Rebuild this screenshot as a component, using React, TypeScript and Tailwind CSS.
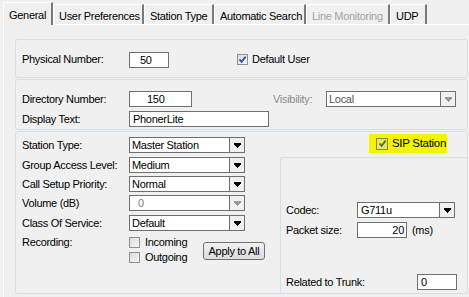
import React from "react";
import clsx from "clsx";

type TabProps = { label: string; width: string; active?: boolean; disabled?: boolean };

function Tab({ label, width, active, disabled }: TabProps) {
  return (
    <div
      className={clsx(
        "border-l border-t border-l-white border-t-white border-r-2 border-r-[#7a7a7a] pl-[5px] leading-[13px] whitespace-nowrap overflow-hidden",
        width,
        active ? "relative z-10 h-[23px] -mb-px pt-[6px] pl-[5px] bg-[#f0f0f0]" : "h-[20px] pt-[5px] pl-[4px]",
        disabled && "text-[#a3a3a3]"
      )}
    >
      {label}
    </div>
  );
}

function Arrow({ muted }: { muted?: boolean }) {
  return (
    <svg width="7" height="5" viewBox="0 0 7 5" shapeRendering="crispEdges">
      <g fill={muted ? "#9a9a9a" : "#000"}>
        <rect x="0" y="0" width="7" height="2" />
        <rect x="1" y="2" width="5" height="1" />
        <rect x="2" y="3" width="3" height="1" />
        <rect x="3" y="4" width="1" height="1" />
      </g>
    </svg>
  );
}

type SelectProps = { value: string; width: string; disabled?: boolean; textClass?: string };

function Select({ value, width, disabled, textClass }: SelectProps) {
  return (
    <div className={clsx("flex h-[16px] border border-[#6f6f6f] bg-white", width)}>
      <div
        className={clsx(
          "flex-1 leading-[14px] pl-[2px] whitespace-nowrap overflow-hidden",
          disabled && "text-[#7d7d7d]",
          textClass
        )}
      >
        {value}
      </div>
      <div className="w-[15px] border-l border-[#6f6f6f] bg-[#f0f0f0] flex items-center justify-center">
        <Arrow muted={disabled} />
      </div>
    </div>
  );
}

type InputProps = { value: string; width: string; textClass?: string };

function TextInput({ value, width, textClass }: InputProps) {
  return (
    <div className={clsx("h-[16px] border border-[#6f6f6f] bg-white leading-[14px] whitespace-nowrap", width, textClass)}>
      {value}
    </div>
  );
}

type CheckProps = { checked?: boolean; tone?: "blue" | "olive"; size?: string };

function Checkbox({ checked, tone = "blue", size = "w-[11px] h-[11px]" }: CheckProps) {
  return (
    <div
      className={clsx(
        "flex items-center justify-center border shrink-0",
        size,
        tone === "olive"
          ? "border-[#8a8a3a] bg-[#e4e46a]"
          : "border-[#8e8f8f] bg-gradient-to-br from-[#dcdcdc] to-[#f6f6f6]"
      )}
    >
      {checked && (
        <svg width="9" height="9" viewBox="0 0 9 9">
          <path
            d="M1.5 4.5 L3.6 6.8 L7.6 1.6"
            fill="none"
            stroke={tone === "olive" ? "#5a6e1c" : "#2a50b8"}
            strokeWidth="1.8"
          />
        </svg>
      )}
    </div>
  );
}

function Row({ label, children }: { label: string; children: React.ReactNode }) {
  return (
    <div className="flex items-center h-[16px]">
      <span className="w-[107px] leading-[16px] whitespace-nowrap">{label}</span>
      {children}
    </div>
  );
}

export default function App() {
  return (
    <div className="w-[469px] h-[297px] overflow-hidden bg-[#f0f0f0] text-black text-[11px] tracking-[-0.3px] leading-none font-['Liberation_Sans',Arial,sans-serif]">
      {/* tab strip */}
      <div className="flex items-end h-[24px] pl-[3px]">
        <Tab label="General" width="w-[50px]" active />
        <Tab label="User Preferences" width="w-[91px]" />
        <Tab label="Station Type" width="w-[70px]" />
        <Tab label="Automatic Search" width="w-[92px]" />
        <Tab label="Line Monitoring" width="w-[84px]" disabled />
        <Tab label="UDP" width="w-[37px]" />
      </div>

      {/* tab page */}
      <div className="ml-[3px] w-[466px] h-[273px] border-l border-t border-white pt-[14px] pl-[11px] pr-px flex flex-col gap-px">
        <div className="h-[39px] rounded-[3px] border border-[#d5dfe5] flex items-center pl-[6px] pt-[2px]">
          <span className="w-[107px]">Physical Number:</span>
          <TextInput value="50" width="w-[40px]" textClass="pl-[10px]" />
          <div className="ml-[68px] flex items-center gap-[4px]">
            <Checkbox checked />
            <span>Default User</span>
          </div>
        </div>

        <div className="h-[51px] rounded-[3px] border border-[#d5dfe5] pl-[6px] pt-[11px] flex flex-col gap-[4px]">
          <div className="flex items-center h-[16px]">
            <span className="w-[107px]">Directory Number:</span>
            <TextInput value="150" width="w-[63px]" textClass="pl-[17px]" />
            <span className="ml-[81px] w-[53px] text-[#8c8c8c]">Visibility:</span>
            <Select value="Local" width="w-[130px]" disabled textClass="!text-[#555]" />
          </div>
          <div className="flex items-center h-[16px]">
            <span className="w-[107px]">Display Text:</span>
            <TextInput value="PhonerLite" width="w-[140px]" textClass="pl-[3px]" />
          </div>
        </div>

        <div className="h-[163px] rounded-[3px] border border-[#d5dfe5] flex">
          <div className="w-[264px] pl-[6px] pt-[5px] flex flex-col">
            <Row label="Station Type:">
              <Select value="Master Station" width="w-[116px]" />
            </Row>
            <div className="mt-[4px]">
              <Row label="Group Access Level:">
                <Select value="Medium" width="w-[116px]" />
              </Row>
            </div>
            <div className="mt-[3px]">
              <Row label="Call Setup Priority:">
                <Select value="Normal" width="w-[116px]" />
              </Row>
            </div>
            <div className="mt-[3px]">
              <Row label="Volume (dB)">
                <Select value="0" width="w-[116px]" disabled textClass="pl-[8px]" />
              </Row>
            </div>
            <div className="mt-[4px]">
              <Row label="Class Of Service:">
                <Select value="Default" width="w-[116px]" />
              </Row>
            </div>
            <div className="mt-[6px] flex">
              <span className="w-[107px] leading-[13px] -mt-px">Recording:</span>
              <div className="w-[74px] flex flex-col gap-[4px]">
                <div className="flex items-center gap-[5px] leading-[11px]">
                  <Checkbox />
                  <span>Incoming</span>
                </div>
                <div className="flex items-center gap-[5px] leading-[11px]">
                  <Checkbox />
                  <span>Outgoing</span>
                </div>
              </div>
              <button className="mt-[5px] w-[62px] h-[18px] rounded-[3px] border border-[#707070] bg-gradient-to-b from-[#f2f2f2] to-[#dcdcdc] leading-[16px] text-center tracking-[-0.3px]">
                Apply to All
              </button>
            </div>
          </div>

          <div className="flex-1 flex flex-col">
            <div className="mt-[2px] ml-[89px] w-[78px] h-[19px] bg-[#f4f400] rounded-[1px] flex items-center pl-[7px] gap-[4px]">
              <Checkbox checked tone="olive" size="w-[12px] h-[12px]" />
              <span className="text-[11.5px]">SIP Station</span>
            </div>
            <div className="mt-[4px] flex-1 rounded-tl-[3px] border-l border-t border-[#d5dfe5] pl-[5px] pt-[44px] pb-[3px] flex flex-col">
              <div className="flex items-center h-[16px]">
                <span className="w-[71px]">Codec:</span>
                <Select value="G711u" width="w-[98px]" textClass="pl-[3px]" />
              </div>
              <div className="mt-[4px] flex items-center h-[16px]">
                <span className="w-[71px]">Packet size:</span>
                <TextInput value="20" width="w-[50px]" textClass="text-right pr-[2px]" />
                <span className="ml-[5px]">(ms)</span>
              </div>
              <div className="mt-auto flex items-center h-[16px]">
                <span className="w-[131px]">Related to Trunk:</span>
                <TextInput value="0" width="w-[40px]" textClass="pl-[3px]" />
              </div>
            </div>
          </div>
        </div>
      </div>
    </div>
  );
}
